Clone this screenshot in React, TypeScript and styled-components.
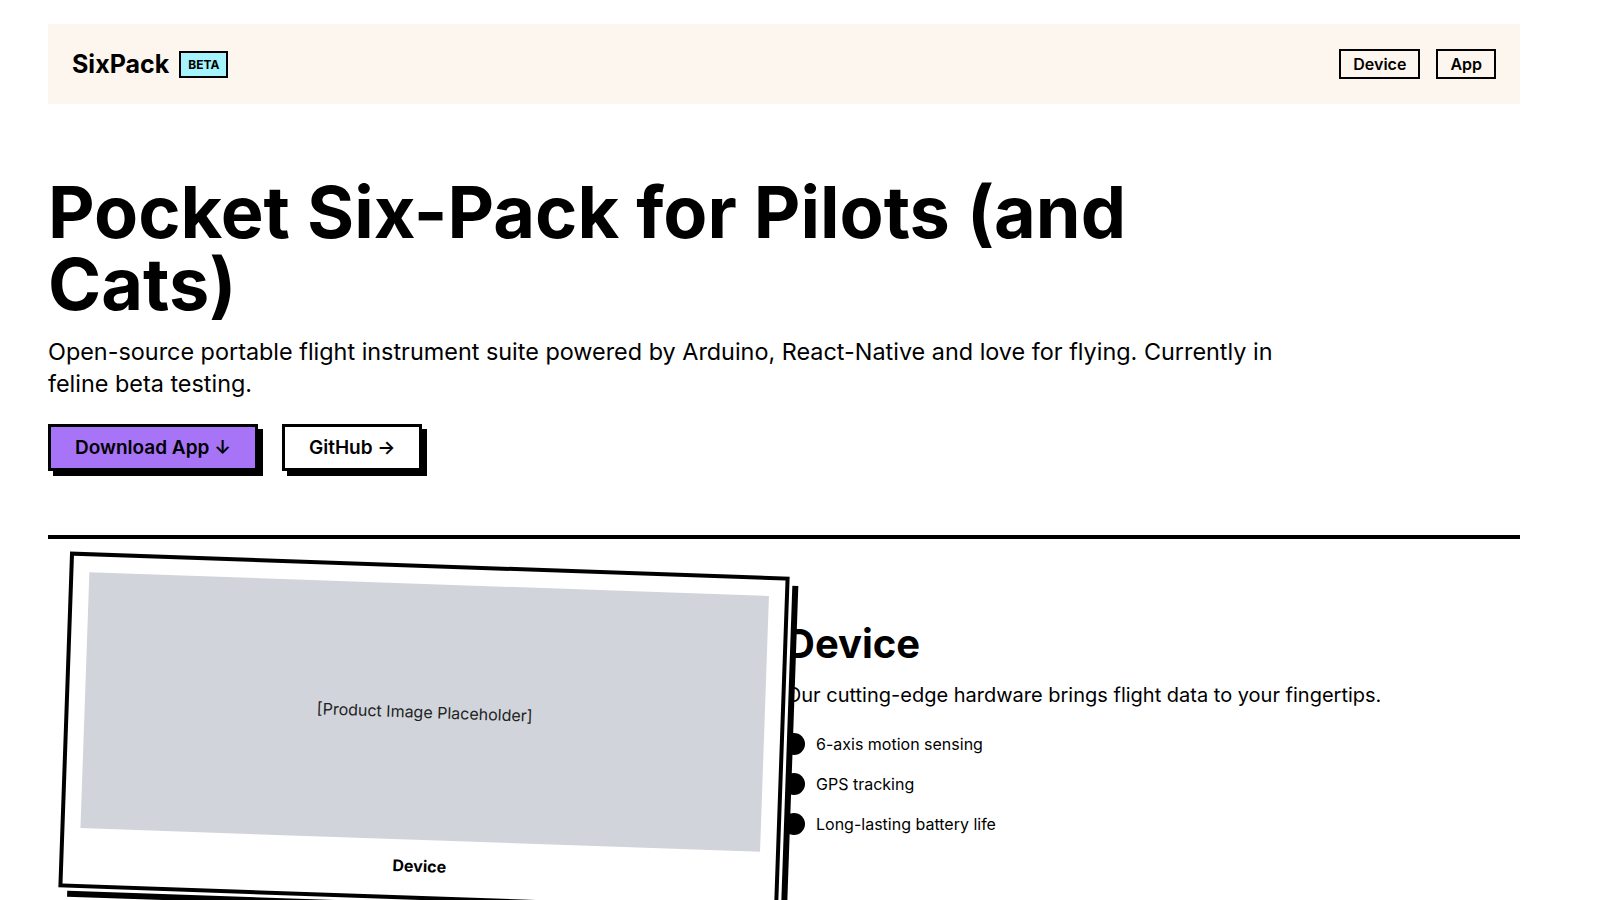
import React from "react";
import styled, { createGlobalStyle } from "styled-components";

const GlobalStyle = createGlobalStyle`
  * {
    box-sizing: border-box;
  }
  body {
    margin: 0;
    background: #ffffff;
    color: #000000;
    font-family: Inter, "Noto Sans", "Liberation Sans", sans-serif;
  }
`;

const Page = styled.div`
  max-width: 1472px;
  margin: 0 48px;
  padding-top: 24px;
`;

const TopBar = styled.header`
  height: 80px;
  padding: 0 24px;
  background: #fdf6ee;
  display: flex;
  align-items: center;
  justify-content: space-between;
`;

const Brand = styled.div`
  display: flex;
  align-items: center;
  gap: 10px;
`;

const BrandName = styled.span`
  font-size: 25px;
  font-weight: 700;
`;

const Badge = styled.span`
  display: inline-flex;
  align-items: center;
  height: 27px;
  padding: 0 7px;
  background: #a5f3fc;
  border: 2px solid #000;
  font-size: 12px;
  font-weight: 700;
`;

const Nav = styled.nav`
  display: flex;
  gap: 16px;
`;

const NavButton = styled.a`
  display: inline-flex;
  align-items: center;
  height: 30px;
  padding: 0 12px;
  border: 2px solid #000;
  font-size: 16px;
  font-weight: 600;
  color: #000;
  text-decoration: none;
`;

const Hero = styled.section`
  padding: 72px 0 64px;
`;

const Title = styled.h1`
  margin: 0;
  max-width: 1180px;
  font-size: 72px;
  line-height: 72px;
  font-weight: 700;
`;

const Lead = styled.p`
  margin: 16px 0 0;
  max-width: 1290px;
  font-size: 23.4px;
  line-height: 32px;
`;

const Actions = styled.div`
  display: flex;
  gap: 24px;
  margin-top: 24px;
`;

const ActionButton = styled.a<{ $primary?: boolean }>`
  display: inline-flex;
  align-items: center;
  gap: 5px;
  height: 47px;
  padding: 0 24px;
  border: 3px solid #000;
  box-shadow: 5px 5px 0 #000;
  background: ${(p) => (p.$primary ? "#a773f7" : "#ffffff")};
  color: #000;
  font-size: 19px;
  font-weight: 600;
  text-decoration: none;
`;

const Rule = styled.hr`
  margin: 0;
  border: none;
  height: 4px;
  background: #000;
`;

const Feature = styled.section`
  display: grid;
  grid-template-columns: 738px 1fr;
  align-items: center;
  margin-top: 25px;
`;

const Card = styled.div`
  position: relative;
  z-index: 1;
  width: 720px;
  padding: 16px 16px 18px;
  background: #fff;
  border: 4px solid #000;
  box-shadow: 3px 3px 0 #fff, 9px 9px 0 #000;
  transform: translateX(16px) rotate(2deg);
`;

const Placeholder = styled.div`
  height: 256px;
  background: #d1d5db;
  display: flex;
  align-items: center;
  justify-content: center;
  font-size: 16px;
  color: #222;
`;

const Caption = styled.div`
  margin-top: 14px;
  text-align: center;
  font-size: 16px;
  line-height: 24px;
  font-weight: 700;
`;

const Copy = styled.div`
  display: flex;
  flex-direction: column;
  padding-bottom: 8px;
`;

const SectionTitle = styled.h2`
  margin: 0;
  font-size: 40px;
  line-height: 48px;
  font-weight: 700;
`;

const SectionText = styled.p`
  margin: 13px 0 0;
  font-size: 20px;
  line-height: 28px;
`;

const Points = styled.ul`
  list-style: none;
  margin: 23px 0 0;
  padding: 0;
  display: flex;
  flex-direction: column;
  gap: 16px;
`;

const Point = styled.li`
  display: flex;
  align-items: center;
  gap: 11px;
  font-size: 16px;
  line-height: 24px;
`;

const Dot = styled.span`
  width: 22px;
  height: 22px;
  margin-left: -3px;
  border-radius: 50%;
  background: #000;
  flex-shrink: 0;
`;

const points = ["6-axis motion sensing", "GPS tracking", "Long-lasting battery life"];

export default function App() {
  return (
    <>
      <GlobalStyle />
      <Page>
        <TopBar>
          <Brand>
            <BrandName>SixPack</BrandName>
            <Badge>BETA</Badge>
          </Brand>
          <Nav>
            <NavButton href="#device">Device</NavButton>
            <NavButton href="#app">App</NavButton>
          </Nav>
        </TopBar>

        <Hero>
          <Title>Pocket Six-Pack for Pilots (and Cats)</Title>
          <Lead>
            Open-source portable flight instrument suite powered by Arduino, React-Native and love
            for flying. Currently in feline beta testing.
          </Lead>
          <Actions>
            <ActionButton href="#download" $primary>
              Download App ↓
            </ActionButton>
            <ActionButton href="#github">GitHub →</ActionButton>
          </Actions>
        </Hero>

        <Rule />

        <Feature id="device">
          <Card>
            <Placeholder>[Product Image Placeholder]</Placeholder>
            <Caption>Device</Caption>
          </Card>
          <Copy>
            <SectionTitle>Device</SectionTitle>
            <SectionText>Our cutting-edge hardware brings flight data to your fingertips.</SectionText>
            <Points>
              {points.map((p) => (
                <Point key={p}>
                  <Dot />
                  {p}
                </Point>
              ))}
            </Points>
          </Copy>
        </Feature>
      </Page>
    </>
  );
}
